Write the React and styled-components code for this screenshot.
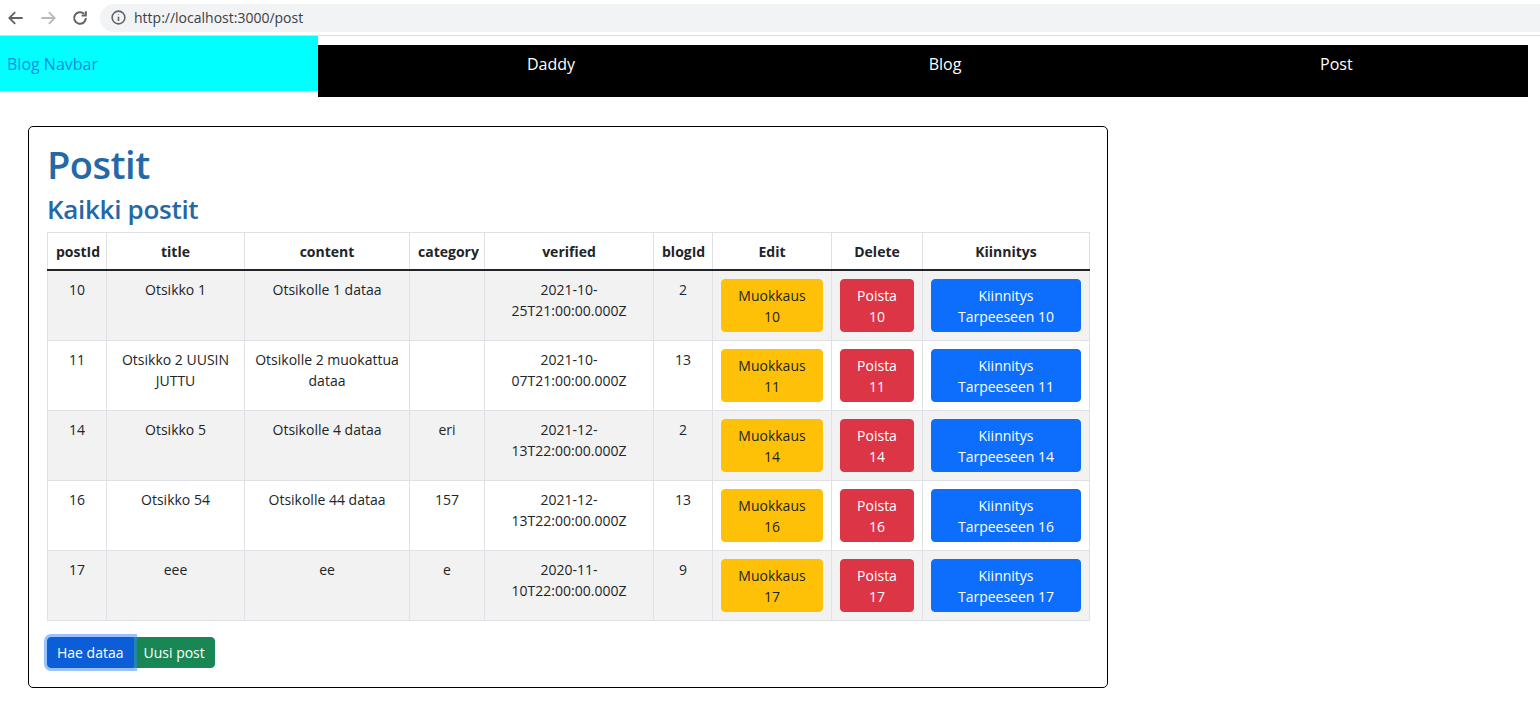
import React from "react"
import styled, { createGlobalStyle } from "styled-components"

const GlobalStyle = createGlobalStyle`
  body {
    margin: 0;
    font-family: "Open Sans", "Noto Sans", sans-serif;
    color: #212529;
    background: #fff;
  }
  * { box-sizing: border-box; }
`

const Chrome = styled.div`
  height: 36px;
  display: flex;
  align-items: center;
  border-bottom: 1px solid #dadce0;
`

const NavIcon = styled.span`
  width: 32px;
  display: flex;
  justify-content: center;
  color: ${({ dim }) => (dim ? "#b7b9bc" : "#5f6368")};
`

const AddressBar = styled.div`
  flex: 1;
  height: 28px;
  margin-left: 4px;
  background: #f1f3f4;
  border-radius: 14px 0 0 14px;
  display: flex;
  align-items: center;
  padding-left: 10px;
  font-size: 14px;
  color: #3c4043;
  gap: 7px;
`

const NavRow = styled.div`
  display: flex;
  align-items: flex-start;
`

const Brand = styled.div`
  width: 318px;
  height: 55px;
  background: #00ffff;
  color: #1e88e5;
  font-size: 16px;
  padding: 17px 0 0 7px;
`

const NavLinks = styled.nav`
  margin-top: 9px;
  width: 1210px;
  height: 52px;
  background: #000;
  display: grid;
  grid-template-columns: 396px 392px 1fr;
  padding-left: 35px;

  a {
    color: #fff;
    text-decoration: none;
    text-align: center;
    font-size: 16px;
    line-height: 24px;
    padding-top: 7px;
  }
  a:last-child {
    text-align: left;
    padding-left: 179px;
  }
`

const Card = styled.section`
  margin: 29px 0 0 28px;
  width: 1080px;
  border: 1px solid #000;
  border-radius: 5px;
  padding: 15px 18px 19px;
`

const Title = styled.h1`
  margin: 0 0 6px;
  font-size: 38px;
  line-height: 1.2;
  font-weight: 600;
  letter-spacing: -0.5px;
  color: #2468a8;
`

const SubTitle = styled.h3`
  margin: 0 0 7px;
  font-size: 26px;
  line-height: 1.2;
  font-weight: 600;
  letter-spacing: -0.3px;
  color: #2468a8;
`

const Table = styled.table`
  width: 100%;
  border-collapse: collapse;
  table-layout: fixed;
  font-size: 14px;
  line-height: 21px;
  text-align: center;

  th, td {
    border: 1px solid #dee2e6;
    padding: 8px;
    vertical-align: top;
  }
  th {
    font-weight: 700;
    padding-bottom: 7px;
  }
  thead th {
    border-bottom: 2px solid #212529;
  }
  tbody tr:nth-child(odd) td {
    background: #f2f2f2;
  }
`

const CellButton = styled.button`
  display: block;
  width: 100%;
  border: 1px solid ${({ bg }) => bg};
  background: ${({ bg }) => bg};
  color: ${({ fg }) => fg};
  border-radius: 4px;
  font-family: inherit;
  font-size: 14px;
  line-height: 21px;
  padding: 5px 12px 4px;
  cursor: pointer;
`

const ButtonGroup = styled.div`
  display: flex;
  margin-top: 16px;
`

const GroupButton = styled.button`
  position: relative;
  border: 1px solid ${({ bg }) => bg};
  background: ${({ bg }) => bg};
  color: #fff;
  font-family: inherit;
  font-size: 14px;
  line-height: 21px;
  padding: 4px 9px;
  border-radius: ${({ first }) => (first ? "4px 0 0 4px" : "0 4px 4px 0")};
  box-shadow: ${({ focused }) => (focused ? "0 0 0 3px rgba(49,132,253,.5)" : "none")};
  z-index: ${({ focused }) => (focused ? 1 : 0)};
  cursor: pointer;
`

const posts = [
  { id: 10, title: "Otsikko 1", content: "Otsikolle 1 dataa", category: "", verified: "2021-10-25T21:00:00.000Z", blogId: 2 },
  { id: 11, title: "Otsikko 2 UUSIN JUTTU", content: "Otsikolle 2 muokattua dataa", category: "", verified: "2021-10-07T21:00:00.000Z", blogId: 13 },
  { id: 14, title: "Otsikko 5", content: "Otsikolle 4 dataa", category: "eri", verified: "2021-12-13T22:00:00.000Z", blogId: 2 },
  { id: 16, title: "Otsikko 54", content: "Otsikolle 44 dataa", category: "157", verified: "2021-12-13T22:00:00.000Z", blogId: 13 },
  { id: 17, title: "eee", content: "ee", category: "e", verified: "2020-11-10T22:00:00.000Z", blogId: 9 },
]

const cols = [59, 138, 165, 75, 169, 59, 119, 91, 167]

const App = () => {
  return (
    <>
      <GlobalStyle />
      <Chrome>
        <NavIcon>
          <svg width="20" height="20" viewBox="0 0 24 24" fill="none" stroke="currentColor" strokeWidth="2.2">
            <path d="M20 12H5M11 5l-7 7 7 7" />
          </svg>
        </NavIcon>
        <NavIcon dim>
          <svg width="20" height="20" viewBox="0 0 24 24" fill="none" stroke="currentColor" strokeWidth="2.2">
            <path d="M4 12h15M13 5l7 7-7 7" />
          </svg>
        </NavIcon>
        <NavIcon>
          <svg width="20" height="20" viewBox="0 0 24 24" fill="none" stroke="currentColor" strokeWidth="2.4">
            <path d="M19 12a7 7 0 1 1-2.05-4.95" />
            <path d="M19 4v5h-5" />
          </svg>
        </NavIcon>
        <AddressBar>
          <svg width="17" height="17" viewBox="0 0 24 24" fill="none" stroke="#5f6368" strokeWidth="2.2">
            <circle cx="12" cy="12" r="9" />
            <path d="M12 11v6M12 7.5v.5" />
          </svg>
          <span>http://localhost:3000/post</span>
        </AddressBar>
      </Chrome>
      <NavRow>
        <Brand>Blog Navbar</Brand>
        <NavLinks>
          <a href="#">Daddy</a>
          <a href="#">Blog</a>
          <a href="#">Post</a>
        </NavLinks>
      </NavRow>
      <Card>
        <Title>Postit</Title>
        <SubTitle>Kaikki postit</SubTitle>
        <Table>
          <colgroup>
            {cols.map((w, i) => (
              <col key={i} style={{ width: w }} />
            ))}
          </colgroup>
          <thead>
            <tr>
              <th>postId</th>
              <th>title</th>
              <th>content</th>
              <th>category</th>
              <th>verified</th>
              <th>blogId</th>
              <th>Edit</th>
              <th>Delete</th>
              <th>Kiinnitys</th>
            </tr>
          </thead>
          <tbody>
            {posts.map((p) => (
              <tr key={p.id}>
                <td>{p.id}</td>
                <td>{p.title}</td>
                <td>{p.content}</td>
                <td>{p.category}</td>
                <td>{p.verified.slice(0, 8)}<br />{p.verified.slice(8)}</td>
                <td>{p.blogId}</td>
                <td>
                  <CellButton bg="#ffc107" fg="#212529">Muokkaus {p.id}</CellButton>
                </td>
                <td>
                  <CellButton bg="#dc3545" fg="#fff">Poista {p.id}</CellButton>
                </td>
                <td>
                  <CellButton bg="#0d6efd" fg="#fff">Kiinnitys Tarpeeseen {p.id}</CellButton>
                </td>
              </tr>
            ))}
          </tbody>
        </Table>
        <ButtonGroup>
          <GroupButton first focused bg="#0b5ed7">Hae dataa</GroupButton>
          <GroupButton bg="#198754">Uusi post</GroupButton>
        </ButtonGroup>
      </Card>
    </>
  )
}

export default App
